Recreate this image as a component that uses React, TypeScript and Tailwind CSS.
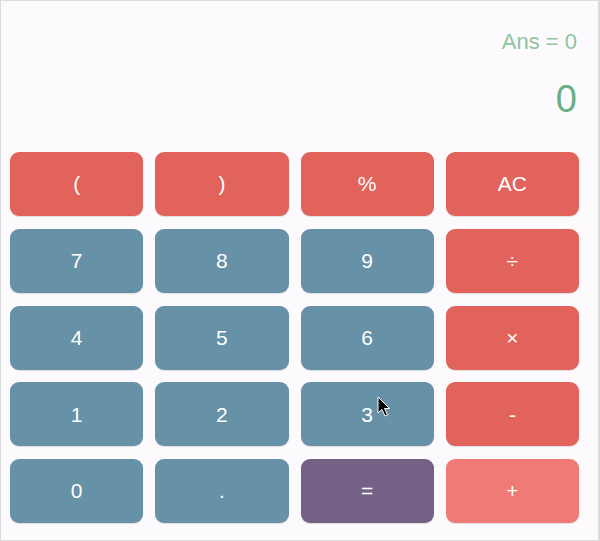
import React from "react";

type Btn = { label: string; kind: "op" | "num" | "eq" | "hover" };

const rows: Btn[][] = [
  [
    { label: "(", kind: "op" },
    { label: ")", kind: "op" },
    { label: "%", kind: "op" },
    { label: "AC", kind: "op" },
  ],
  [
    { label: "7", kind: "num" },
    { label: "8", kind: "num" },
    { label: "9", kind: "num" },
    { label: "÷", kind: "op" },
  ],
  [
    { label: "4", kind: "num" },
    { label: "5", kind: "num" },
    { label: "6", kind: "num" },
    { label: "×", kind: "op" },
  ],
  [
    { label: "1", kind: "num" },
    { label: "2", kind: "num" },
    { label: "3", kind: "num" },
    { label: "-", kind: "op" },
  ],
  [
    { label: "0", kind: "num" },
    { label: ".", kind: "num" },
    { label: "=", kind: "eq" },
    { label: "+", kind: "hover" },
  ],
];

const kindClass: Record<Btn["kind"], string> = {
  op: "bg-[#e2625c]",
  num: "bg-[#6691a7]",
  eq: "bg-[#736186]",
  hover: "bg-[#f07a75]",
};

export default function App() {
  return (
    <div
      className="relative w-[600px] h-[541px] box-border border border-r-2 border-[#dcdcdc] bg-[#fcfafc] overflow-hidden"
      style={{ fontFamily: '"Liberation Sans", Arial, sans-serif' }}
    >
      <div className="flex flex-col items-end pr-[21px] pt-[28px]">
        <div className="text-[22px] leading-[26px] text-[#8fc49e]">Ans = 0</div>
        <div className="mt-[22px] text-[38px] leading-[44px] text-[#6aae86]">0</div>
      </div>
      <div className="grid grid-cols-4 gap-x-[12px] gap-y-[12.75px] pl-[9px] pr-[19px] mt-[31px]">
        {rows.flat().map((b, i) => (
          <div
            key={i}
            className={`h-[64px] rounded-[9px] flex items-center justify-center text-white text-[21px] shadow-[0_1px_1px_rgba(0,0,0,0.12)] ${kindClass[b.kind]}`}
          >
            {b.label}
          </div>
        ))}
      </div>
      <svg
        className="absolute left-[376px] top-[395px]"
        width="14"
        height="22"
        viewBox="0 0 14 22"
      >
        <path
          d="M1 1 L1 17 L5 13.5 L8 20 L10.5 19 L7.5 12.5 L12.5 12.5 Z"
          fill="#000"
          stroke="#fff"
          strokeWidth="1"
        />
      </svg>
    </div>
  );
}
